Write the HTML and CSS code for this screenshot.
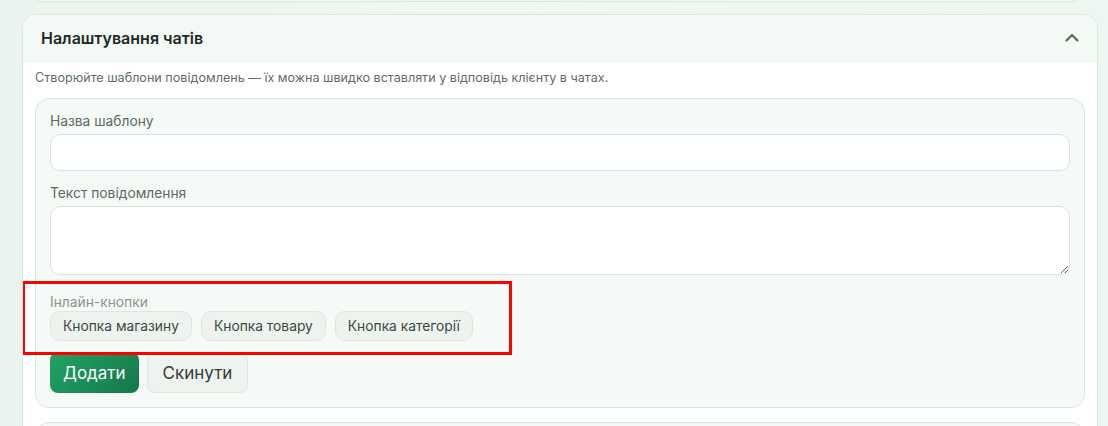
FILE: index.html
```html
<!DOCTYPE html>
<html lang="uk">
<head>
  <meta charset="UTF-8">
  <meta name="viewport" content="width=device-width, initial-scale=1.0">
  <title>Налаштування чатів</title>
  <link rel="stylesheet" href="styles.css">
</head>
<body>
  <div class="page">
    <div class="card card-prev"></div>

    <section class="card">
      <header class="card-head">
        <h2>Налаштування чатів</h2>
        <svg class="chevron" width="16" height="16" viewBox="0 0 16 16">
          <path d="M2.5 10.5 L8 5 L13.5 10.5" fill="none" stroke="#4b6a5a" stroke-width="2" stroke-linecap="round" stroke-linejoin="round"/>
        </svg>
      </header>
      <div class="card-body">
        <p class="hint">Створюйте шаблони повідомлень — їх можна швидко вставляти у відповідь клієнту в чатах.</p>

        <form class="form-box">
          <label class="field-label" for="tpl-name">Назва шаблону</label>
          <input class="input" id="tpl-name" type="text">

          <label class="field-label" for="tpl-text">Текст повідомлення</label>
          <textarea class="input textarea" id="tpl-text"></textarea>

          <div class="inline-group">
            <span class="field-label muted">Інлайн-кнопки</span>
            <div class="chips">
              <button type="button" class="chip">Кнопка магазину</button>
              <button type="button" class="chip">Кнопка товару</button>
              <button type="button" class="chip">Кнопка категорії</button>
            </div>
            <!-- annotation frame -->
            <div class="highlight"></div>
          </div>

          <div class="actions">
            <button type="button" class="btn btn-primary">Додати</button>
            <button type="reset" class="btn btn-light">Скинути</button>
          </div>
        </form>

        <div class="form-box list-box"></div>
      </div>
    </section>
  </div>
</body>
</html>
```

FILE: styles.css
```css
* {
  margin: 0;
  padding: 0;
  box-sizing: border-box;
}

body {
  background: linear-gradient(90deg, #eaf3ed 0%, #f1f7f3 40%, #eef6f1 100%);
  font-family: 'Inter', 'Open Sans', sans-serif;
  color: #1f2d26;
  height: 426px;
  overflow: hidden;
}

.page {
  display: flex;
  flex-direction: column;
  gap: 12px;
  padding: 0 10px 0 22px;
  margin-top: -20px;
}

.card {
  background: #fff;
  border: 1px solid #d9e8df;
  border-radius: 14px;
  overflow: hidden;
}

.card-prev {
  height: 22px;
  margin: 0 16px 0 8px;
  background: #f3f8f5;
}

.card-head {
  display: flex;
  align-items: center;
  justify-content: space-between;
  height: 48px;
  padding: 0 17px 2px 18px;
  background: #f3f9f5;
}

.card-head h2 {
  font-size: 16px;
  font-weight: 600;
  color: #1d2b24;
}

.chevron {
  display: block;
}

.card-body {
  display: flex;
  flex-direction: column;
  gap: 14px;
  padding: 7px 12px 13px 12px;
}

.hint {
  font-size: 12.6px;
  color: #5f6d66;
  margin-bottom: -1px;
}

.form-box {
  display: flex;
  flex-direction: column;
  background: #f5faf7;
  border: 1px solid #d9e8df;
  border-radius: 14px;
  padding: 14px;
}

.list-box {
  height: 60px;
}

.field-label {
  display: block;
  font-size: 13.8px;
  color: #5b6a62;
  margin-bottom: 5px;
}

.muted {
  color: #89958f;
  margin-bottom: 1px;
}

.input {
  display: block;
  width: 100%;
  height: 37px;
  background: #fff;
  border: 1px solid #d6e5dc;
  border-radius: 10px;
  font: inherit;
  margin-bottom: 14px;
}

.textarea {
  height: 69px;
  resize: vertical;
  margin-bottom: 19px;
}

.inline-group {
  position: relative;
  margin-bottom: 11px;
}

.chips {
  display: flex;
  gap: 9px;
}

.chip {
  height: 30px;
  padding: 0 12px;
  background: #edf4ef;
  border: 1px solid #dbe7df;
  border-radius: 10px;
  font-family: inherit;
  font-size: 13.8px;
  color: #3b4841;
}

.highlight {
  position: absolute;
  left: -28px;
  top: -13px;
  width: 490px;
  height: 74px;
  border: 3px solid #ff0000;
  pointer-events: none;
}

.actions {
  display: flex;
  gap: 8px;
}

.btn {
  height: 41px;
  padding: 0 13px;
  border-radius: 8px;
  font-family: inherit;
  font-size: 17px;
}

.btn-primary {
  background: linear-gradient(135deg, #23a466 0%, #15774a 100%);
  border: none;
  color: #fff;
}

.btn-light {
  padding: 0 15px;
  background: #edf4ef;
  border: 1px solid #dbe7df;
  color: #333b37;
}
```
